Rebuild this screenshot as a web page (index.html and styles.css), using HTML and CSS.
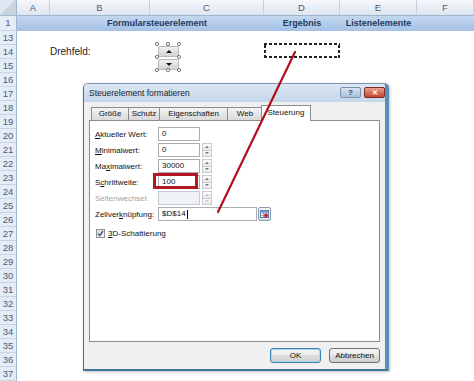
FILE: index.html
```html
<!DOCTYPE html>
<html lang="de">
<head>
  <meta charset="UTF-8">
  <meta name="viewport" content="width=device-width, initial-scale=1.0">
  <title>Drehfeld – Steuerelement formatieren</title>
  <link rel="stylesheet" href="styles.css">
</head>
<body>

  <div class="sheet">
    <div class="col-heads">
      <div class="corner"></div>
      <div class="ch">A</div>
      <div class="ch">B</div>
      <div class="ch">C</div>
      <div class="ch">D</div>
      <div class="ch">E</div>
      <div class="ch">F</div>
    </div>

    <div class="row row-title">
      <div class="rh">1</div>
      <div class="t-bc">Formularsteuerelement</div>
      <div class="t-d">Ergebnis</div>
      <div class="t-e">Listenelemente</div>
    </div>

    <div class="row"><div class="rh">13</div></div>
    <div class="row">
      <div class="rh">14</div>
      <div class="cell-b">Drehfeld:</div>
      <div class="cell-d marquee"></div>
    </div>
    <div class="row"><div class="rh">15</div></div>
    <div class="row"><div class="rh">16</div></div>
    <div class="row"><div class="rh">17</div></div>
    <div class="row"><div class="rh">18</div></div>
    <div class="row"><div class="rh">19</div></div>
    <div class="row"><div class="rh">20</div></div>
    <div class="row"><div class="rh">21</div></div>
    <div class="row"><div class="rh">22</div></div>
    <div class="row"><div class="rh">23</div></div>
    <div class="row"><div class="rh">24</div></div>
    <div class="row"><div class="rh">25</div></div>
    <div class="row"><div class="rh">26</div></div>
    <div class="row"><div class="rh">27</div></div>
    <div class="row"><div class="rh">28</div></div>
    <div class="row"><div class="rh">29</div></div>
    <div class="row"><div class="rh">30</div></div>
    <div class="row"><div class="rh">31</div></div>
    <div class="row"><div class="rh">32</div></div>
    <div class="row"><div class="rh">33</div></div>
    <div class="row"><div class="rh">34</div></div>
    <div class="row"><div class="rh">35</div></div>
    <div class="row"><div class="rh">36</div></div>
    <div class="row"><div class="rh">37</div></div>

    <!-- spin button control drawn on the sheet, selected -->
    <div class="spinner">
      <div class="sp-btn sp-up"></div>
      <div class="sp-btn sp-down"></div>
      <svg class="handles" width="26" height="30" viewBox="0 0 26 30">
        <g fill="#fff" stroke="#555" stroke-width="0.8">
          <circle cx="2" cy="2" r="1.6"/><circle cx="13" cy="2" r="1.6"/><circle cx="24" cy="2" r="1.6"/>
          <circle cx="2" cy="15" r="1.6"/><circle cx="24" cy="15" r="1.6"/>
          <circle cx="2" cy="28" r="1.6"/><circle cx="13" cy="28" r="1.6"/><circle cx="24" cy="28" r="1.6"/>
        </g>
      </svg>
    </div>

    <div class="dialog">
      <div class="dlg-title">
        <span class="caption">Steuerelement formatieren</span>
        <div class="title-btns">
          <span class="tb-btn tb-help">?</span>
          <span class="tb-btn tb-close">✕</span>
        </div>
      </div>

      <div class="dlg-body">
        <div class="tabs">
          <div class="tab t-groesse">Größe</div>
          <div class="tab t-schutz">Schutz</div>
          <div class="tab t-eigen">Eigenschaften</div>
          <div class="tab t-web">Web</div>
          <div class="tab t-steuer active">Steuerung</div>
        </div>

        <div class="panel">
          <div class="field">
            <span class="lbl"><u>A</u>ktueller Wert:</span>
            <div class="input">0</div>
          </div>
          <div class="field">
            <span class="lbl"><u>M</u>inimalwert:</span>
            <div class="input">0</div>
            <div class="spin"><span class="s-up"></span><span class="s-down"></span></div>
          </div>
          <div class="field">
            <span class="lbl">Ma<u>x</u>imalwert:</span>
            <div class="input">30000</div>
            <div class="spin"><span class="s-up"></span><span class="s-down"></span></div>
          </div>
          <div class="field">
            <span class="lbl">S<u>c</u>hrittweite:</span>
            <div class="input marked">100</div>
            <div class="spin"><span class="s-up"></span><span class="s-down"></span></div>
          </div>
          <div class="field disabled">
            <span class="lbl">Seitenwechsel:</span>
            <div class="input"></div>
            <div class="spin"><span class="s-up"></span><span class="s-down"></span></div>
          </div>
          <div class="field">
            <span class="lbl">Zellver<u>k</u>nüpfung:</span>
            <div class="input wide">$D$14<span class="caret"></span></div>
            <div class="ref-btn">
              <svg width="10" height="9" viewBox="0 0 10 9">
                <rect x="0.5" y="0.5" width="8" height="7" fill="#fff" stroke="#5a78a8"/>
                <path d="M0.5 3h8M0.5 5.5h8M3.5 0.5v7M6 0.5v7" stroke="#7f9ac4" stroke-width="0.8"/>
                <rect x="0.5" y="0.5" width="8" height="2" fill="#6f8fc2"/>
                <circle cx="6" cy="5.5" r="2" fill="#d42020"/>
              </svg>
            </div>
          </div>

          <div class="check-row">
            <span class="checkbox">
              <svg width="7" height="7" viewBox="0 0 7 7"><path d="M1 3.6l1.8 2L6 1" fill="none" stroke="#3c4f8c" stroke-width="1.4"/></svg>
            </span>
            <span><u>3</u>D-Schattierung</span>
          </div>
        </div>

        <div class="dlg-actions">
          <button class="btn default">OK</button>
          <button class="btn">Abbrechen</button>
        </div>
      </div>
    </div>

    <!-- annotation arrow from the linked cell to the input -->
    <svg class="pointer-line" width="474" height="381" viewBox="0 0 474 381">
      <line x1="295" y1="52" x2="218" y2="212" stroke="#b0101c" stroke-width="2.2" stroke-linecap="round"/>
    </svg>
  </div>

</body>
</html>
```

FILE: styles.css
```css
body {
  margin: 0;
  padding: 0;
  background: #ffffff;
  font-family: 'Liberation Sans', Arial, sans-serif;
}

.sheet {
  position: relative;
  width: 474px;
  height: 381px;
  overflow: hidden;
}

/* grid columns: row head, A, B, C, D, E, F */
.col-heads,
.row {
  display: grid;
  grid-template-columns: 17px 33px 100px 114px 76px 77px 1fr;
}

.col-heads {
  height: 16px;
  box-sizing: border-box;
  background: linear-gradient(#f6f8fb, #dde5ef);
  border-bottom: 1px solid #9eb6ce;
}

.corner {
  background: linear-gradient(135deg, #dfe6ef 50%, #c8d3e0 50%);
  border-right: 1px solid #9eb6ce;
}

.ch {
  border-right: 1px solid #c5d1de;
  font-size: 9.5px;
  line-height: 15px;
  color: #4c5d74;
  text-align: center;
}

.row {
  height: 14px;
}

.rh {
  box-sizing: border-box;
  background: #e4ecf7;
  border-right: 1px solid #9eb6ce;
  border-bottom: 1px solid #c8d5e5;
  font-size: 9.5px;
  line-height: 13px;
  color: #4c5d74;
  text-align: center;
}

.row-title {
  height: 15px;
  background: linear-gradient(#c3d7ef, #a5c1e5);
}

.row-title .rh {
  line-height: 14px;
}

.t-bc,
.t-d,
.t-e {
  font-size: 9px;
  font-weight: bold;
  line-height: 15px;
  color: #1f3a60;
  text-align: center;
}

.t-bc { grid-column: 3 / 5; }
.t-d { grid-column: 5; }
.t-e { grid-column: 6; }

.cell-b {
  grid-column: 3;
  font-size: 10px;
  line-height: 14px;
  color: #222;
}

.cell-d { grid-column: 5; }

/* copy marquee around D14 */
.marquee {
  margin-top: -2px;
  height: 15px;
  background:
    repeating-linear-gradient(90deg, #222 0 3px, transparent 3px 5px) top / 100% 2px no-repeat,
    repeating-linear-gradient(90deg, #222 0 3px, transparent 3px 5px) bottom / 100% 2px no-repeat,
    repeating-linear-gradient(0deg, #222 0 3px, transparent 3px 5px) left / 2px 100% no-repeat,
    repeating-linear-gradient(0deg, #222 0 3px, transparent 3px 5px) right / 2px 100% no-repeat;
}

/* spin control on the sheet */
.spinner {
  position: absolute;
  left: 155px;
  top: 42px;
  width: 26px;
  height: 30px;
  box-sizing: border-box;
  padding: 4px 2px 2px 3px;
  display: flex;
  flex-direction: column;
  gap: 2px;
}

.sp-btn {
  flex: 1;
  display: flex;
  align-items: center;
  justify-content: center;
  background: linear-gradient(#f0f0f0, #d2d2d2);
  border: 1px solid #b9b9b9;
  border-radius: 1px;
}

.sp-up::before {
  content: "";
  border: 3px solid transparent;
  border-bottom: 3px solid #111;
  border-top: none;
}

.sp-down::before {
  content: "";
  border: 3px solid transparent;
  border-top: 3px solid #111;
  border-bottom: none;
}

.handles {
  position: absolute;
  left: 0;
  top: 0;
}

/* dialog */
.dialog {
  position: absolute;
  left: 83px;
  top: 83px;
  width: 306px;
  height: 288px;
  box-sizing: border-box;
  display: flex;
  flex-direction: column;
  background: #f0f0f0;
  border-top: 1px solid #7f96ad;
  border-left: 1px solid #5a6878;
  border-right: 4px solid #5b8cb7;
  border-bottom: 2px solid #3d7696;
  border-radius: 5px 5px 0 0;
  box-shadow: 1px 1px 3px rgba(0, 0, 0, 0.25);
}

.dlg-title {
  height: 18px;
  flex-shrink: 0;
  display: flex;
  align-items: flex-start;
  justify-content: space-between;
  background: linear-gradient(#dce7f4, #c4d6eb);
  border-radius: 4px 4px 0 0;
}

.caption {
  padding-left: 5px;
  font-size: 8.5px;
  line-height: 19px;
  color: #1a1a1a;
}

.title-btns {
  display: flex;
  gap: 3px;
  padding-top: 3px;
}

.tb-btn {
  width: 21px;
  height: 11px;
  box-sizing: border-box;
  border-radius: 2px;
  font-size: 8px;
  line-height: 10px;
  text-align: center;
  font-weight: bold;
}

.tb-help {
  background: linear-gradient(#d8e4f2, #aac0da);
  border: 1px solid #7c93ae;
  color: #2d3f56;
}

.tb-close {
  background: linear-gradient(#e9a090, #c7452f);
  border: 1px solid #7b2c22;
  color: #fff;
  font-size: 7px;
}

.dlg-body {
  flex: 1;
  display: flex;
  flex-direction: column;
  padding: 3px 5px 6px 5px;
}

.tabs {
  height: 15px;
  flex-shrink: 0;
  display: flex;
  align-items: flex-end;
  padding-left: 2px;
}

.tab {
  height: 13px;
  box-sizing: border-box;
  margin-right: -1px;
  border: 1px solid #898c95;
  border-bottom: none;
  background: linear-gradient(#f4f4f4, #e6e6e6 50%, #d9d9d9);
  font-size: 8px;
  line-height: 12px;
  color: #111;
  text-align: center;
}

.t-groesse { width: 38px; }
.t-schutz { width: 32px; }
.t-eigen { width: 69px; }
.t-web { width: 36px; }
.t-steuer { width: 50px; }

.tab.active {
  position: relative;
  z-index: 1;
  height: 16px;
  margin-bottom: -1px;
  margin-left: -1px;
  background: #ffffff;
  line-height: 14px;
}

.panel {
  flex: 1;
  box-sizing: border-box;
  padding: 6px 0 0 5px;
  background: #ffffff;
  border: 1px solid #898c95;
  display: flex;
  flex-direction: column;
  gap: 2px;
  font-size: 8px;
  color: #111;
}

.field {
  height: 14px;
  display: flex;
  align-items: center;
}

.lbl {
  width: 63px;
  flex-shrink: 0;
}

.input {
  position: relative;
  width: 42px;
  height: 14px;
  box-sizing: border-box;
  padding-left: 3px;
  border: 1px solid #abadb3;
  background: #ffffff;
  line-height: 12px;
}

.input.wide {
  width: 99px;
  display: flex;
  align-items: center;
}

.caret {
  width: 1px;
  height: 9px;
  margin-left: 1px;
  background: #000;
}

/* red annotation frame round the step width */
.input.marked::after {
  content: "";
  position: absolute;
  left: -6px;
  top: -3px;
  width: 45px;
  height: 16px;
  border: 3px solid #b3171f;
  box-sizing: border-box;
}

.spin {
  width: 10px;
  height: 14px;
  margin-left: 2px;
  display: flex;
  flex-direction: column;
}

.spin span {
  flex: 1;
  display: flex;
  align-items: center;
  justify-content: center;
  background: linear-gradient(#fbfbfb, #e8e8e8);
  border: 1px solid #c9cbd0;
}

.spin .s-up { border-bottom: none; }

.s-up::before {
  content: "";
  border: 2px solid transparent;
  border-bottom: 2px solid #6f7378;
  border-top: none;
}

.s-down::before {
  content: "";
  border: 2px solid transparent;
  border-top: 2px solid #6f7378;
  border-bottom: none;
}

.field.disabled .lbl { color: #a3a3a3; }
.field.disabled .input { background: #eef1f5; border-color: #c6cbd2; }
.field.disabled .s-up::before { border-bottom-color: #c2c4c8; }
.field.disabled .s-down::before { border-top-color: #c2c4c8; }

.ref-btn {
  width: 13px;
  height: 14px;
  margin-left: 1px;
  box-sizing: border-box;
  display: flex;
  align-items: center;
  justify-content: center;
  border: 1px solid #8d9bb0;
  border-radius: 2px;
  background: linear-gradient(#f3f6fb, #d6dfeb);
}

.check-row {
  margin-top: 6px;
  margin-left: 1px;
  display: flex;
  align-items: center;
  gap: 3px;
}

.checkbox {
  width: 9px;
  height: 9px;
  box-sizing: border-box;
  display: flex;
  align-items: center;
  justify-content: center;
  border: 1px solid #8e8f8f;
  background: linear-gradient(135deg, #dcdcdc, #ffffff);
}

.dlg-actions {
  display: flex;
  justify-content: flex-end;
  gap: 8px;
  padding-top: 6px;
}

.btn {
  width: 51px;
  height: 15px;
  padding: 0;
  font-family: 'Liberation Sans', Arial, sans-serif;
  font-size: 8px;
  color: #111;
  border: 1px solid #707070;
  border-radius: 3px;
  background: linear-gradient(#f3f3f3, #ebebeb 45%, #dddddd 50%, #cfcfcf);
}

.btn.default {
  border-color: #3c7fb1;
  box-shadow: inset 0 0 0 1px #a8d8f0;
}

.pointer-line {
  position: absolute;
  left: 0;
  top: 0;
  z-index: 5;
  pointer-events: none;
}
```
